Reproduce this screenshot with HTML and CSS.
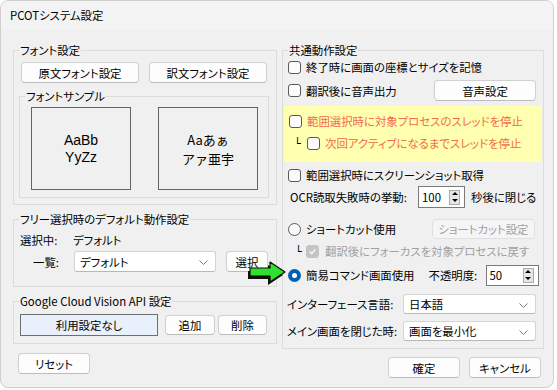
FILE: index.html
```html
<!DOCTYPE html>
<html lang="ja">
<head>
  <meta charset="UTF-8">
  <title>PCOTシステム設定</title>
  <link rel="stylesheet" href="styles.css">
</head>
<body>
  <div class="window">
    <div class="titlebar">PCOTシステム設定</div>

    <div class="content">
      <!-- 左側 -->
      <div class="col-left">
        <fieldset class="group font-group">
          <legend>フォント設定</legend>
          <div class="btn-row">
            <button class="btn font-btn">原文フォント設定</button>
            <button class="btn font-btn">訳文フォント設定</button>
          </div>
          <fieldset class="group sample-group">
            <legend>フォントサンプル</legend>
            <div class="samples">
              <div class="sample">AaBb<br>YyZz</div>
              <div class="sample sample-jp">Aaあぁ<br>アァ亜宇</div>
            </div>
          </fieldset>
        </fieldset>

        <fieldset class="group free-group">
          <legend>フリー選択時のデフォルト動作設定</legend>
          <div class="row current-row">
            <span class="current-label">選択中:</span>
            <span>デフォルト</span>
          </div>
          <div class="row list-row">
            <span class="list-label">一覧:</span>
            <div class="combo list-combo">デフォルト<svg class="chev" viewBox="0 0 9 5"><polyline points="0.5,0.5 4.5,4.5 8.5,0.5"/></svg></div>
            <button class="btn select-btn">選択</button>
          </div>
        </fieldset>

        <fieldset class="group api-group">
          <legend>Google Cloud Vision API 設定</legend>
          <div class="row api-row">
            <div class="api-field">利用設定なし</div>
            <button class="btn add-btn">追加</button>
            <button class="btn del-btn">削除</button>
          </div>
        </fieldset>

        <button class="btn reset-btn">リセット</button>
      </div>

      <!-- 右側 -->
      <div class="col-right">
        <fieldset class="group common-group">
          <legend>共通動作設定</legend>
          <div class="row r-cb1"><span class="cb"></span>終了時に画面の座標とサイズを記憶</div>
          <div class="row r-cb2"><span class="cb"></span>翻訳後に音声出力<button class="btn voice-btn">音声設定</button></div>

          <div class="warn-box">
            <div class="row warn-row"><span class="cb"></span>範囲選択時に対象プロセスのスレッドを停止</div>
            <div class="row warn-sub"><span class="corner">└</span><span class="cb"></span>次回アクティブになるまでスレッドを停止</div>
          </div>

          <div class="row r-cb3"><span class="cb"></span>範囲選択時にスクリーンショット取得</div>
          <div class="row ocr-row">
            <span class="ocr-label">OCR読取失敗時の挙動:</span>
            <div class="spin ocr-spin">100<span class="spin-btns"><i class="up"></i><i class="down"></i></span></div>
            <span class="ocr-after">秒後に閉じる</span>
          </div>

          <div class="row r-radio1"><span class="radio"></span>ショートカット使用<button class="btn btn-disabled sc-btn">ショートカット設定</button></div>
          <div class="row r-sub2"><span class="corner">└</span><span class="cb cb-disabled"><svg viewBox="0 0 13 13"><polyline points="3,6.5 5.5,9 10,4"/></svg></span><span class="muted">翻訳後にフォーカスを対象プロセスに戻す</span></div>
          <div class="row r-radio2">
            <span class="radio radio-on"></span>簡易コマンド画面使用
            <span class="opacity-label">不透明度:</span>
            <div class="spin op-spin">50<span class="spin-btns"><i class="up"></i><i class="down"></i></span></div>
          </div>

          <div class="row lang-row">
            <span class="combo-label">インターフェース言語:</span>
            <div class="combo r-combo">日本語<svg class="chev" viewBox="0 0 9 5"><polyline points="0.5,0.5 4.5,4.5 8.5,0.5"/></svg></div>
          </div>
          <div class="row close-row">
            <span class="combo-label">メイン画面を閉じた時:</span>
            <div class="combo r-combo">画面を最小化<svg class="chev" viewBox="0 0 9 5"><polyline points="0.5,0.5 4.5,4.5 8.5,0.5"/></svg></div>
          </div>
        </fieldset>

        <div class="footer">
          <button class="btn ok-btn">確定</button>
          <button class="btn cancel-btn">キャンセル</button>
        </div>
      </div>

      <svg class="arrow" viewBox="0 0 40 24">
        <polygon class="arrow-shadow" points="1,10 21,10 21,4 36,14 21,24 21,18 1,18"/>
        <polygon class="arrow-body" points="3,7 23,7 23,1 38,11 23,21 23,15 3,15"/>
      </svg>
    </div>
  </div>
</body>
</html>
```

FILE: styles.css
```css
:root {
  --win-bg: #f0f0f0;
  --title-bg: #f3f3f3;
  --group-line: #dcdcdc;
  --btn-bg: #fdfdfd;
  --btn-line: #d0d0d0;
  --warn-bg: #ffffb0;
  --warn-text: #f36a4f;
  --muted: #a0a0a0;
}

html, body {
  margin: 0;
  padding: 0;
  background: #ffffff;
}

body {
  font-family: "Noto Sans CJK JP", "Noto Sans", sans-serif;
  font-size: 11.4px;
  color: #000;
  font-feature-settings: "palt";
}

.window {
  width: 554px;
  height: 388px;
  box-sizing: border-box;
  background: var(--win-bg);
  border: 1px solid #cfcfcf;
  border-radius: 8px;
  overflow: hidden;
}

.titlebar {
  height: 29px;
  line-height: 29px;
  padding-left: 9px;
  background: var(--title-bg);
}

.content {
  position: relative;
  display: flex;
  gap: 5px;
  padding: 13px 0 0 12px;
}

/* group boxes */
.group {
  margin: 0;
  padding: 0;
  min-width: 0;
  box-sizing: border-box;
  border: 1px solid var(--group-line);
}

.group legend {
  margin-left: 5px;
  padding: 0 1px;
  line-height: 14px;
  height: 14px;
}

.row {
  display: flex;
  align-items: center;
  white-space: nowrap;
}

/* buttons */
.btn {
  font: inherit;
  font-feature-settings: "palt";
  color: #000;
  background: var(--btn-bg);
  border: 1px solid var(--btn-line);
  border-bottom-color: #bcbcbc;
  border-radius: 4px;
  padding: 0;
  height: 21px;
  box-sizing: border-box;
  flex: none;
}

.btn-disabled {
  color: var(--muted);
  background: #f5f5f5;
  border-color: #e0e0e0;
}

/* left column */
.col-left {
  width: 264px;
}

.font-group {
  height: 162px;
}

.btn-row {
  display: flex;
  gap: 10px;
  margin: 5px 0 0 7px;
}

.font-btn {
  width: 118px;
}

.sample-group {
  width: 250px;
  height: 109px;
  margin: 6px 0 0 5px;
}

.samples {
  display: flex;
  gap: 27px;
  margin: 4px 0 0 11px;
}

.sample {
  width: 100px;
  height: 83px;
  box-sizing: border-box;
  border: 1px solid #646464;
  display: flex;
  align-items: center;
  justify-content: center;
  text-align: center;
  font-family: "Liberation Sans", "Noto Sans CJK JP", sans-serif;
  font-size: 14px;
  line-height: 17px;
  font-feature-settings: normal;
}

.sample-jp {
  font-family: "Noto Sans CJK JP", sans-serif;
  font-size: 13px;
  line-height: 19px;
}

.free-group {
  height: 75px;
  margin-top: 7px;
}

.current-row {
  height: 20px;
  margin-top: 4px;
  padding-left: 6px;
}

.current-label {
  width: 53px;
}

.list-row {
  height: 21px;
  margin-top: 1px;
  padding-left: 19px;
}

.list-label {
  width: 41px;
}

.combo {
  position: relative;
  display: flex;
  align-items: center;
  box-sizing: border-box;
  height: 21px;
  padding-left: 5px;
  background: #fff;
  border: 1px solid #d4d4d4;
  border-bottom-color: #b8b8b8;
  border-radius: 3px;
}

.chev {
  position: absolute;
  right: 7px;
  top: 8px;
  width: 9px;
  height: 5px;
  fill: none;
  stroke: #7a7a7a;
  stroke-width: 1;
}

.list-combo {
  width: 142px;
}

.select-btn {
  width: 42px;
  margin-left: 10px;
}

.api-group {
  height: 50px;
  margin-top: 7px;
}

.api-row {
  margin: 6px 0 0 6px;
}

.api-field {
  width: 138px;
  height: 22px;
  line-height: 20px;
  box-sizing: border-box;
  text-align: center;
  background: #e8f1fb;
  border: 1px solid #6e6e6e;
}

.add-btn {
  width: 50px;
  height: 20px;
  margin-left: 7px;
}

.del-btn {
  width: 49px;
  height: 20px;
  margin-left: 3px;
}

.reset-btn {
  display: block;
  width: 72px;
  margin: 9px 0 0 5px;
}

/* right column */
.col-right {
  width: 262px;
}

.common-group {
  height: 306px;
}

.cb {
  flex: none;
  width: 13px;
  height: 13px;
  box-sizing: border-box;
  border: 1px solid #5a5a5a;
  border-radius: 3px;
  background: #fbfbfb;
  margin-right: 5px;
}

.cb-disabled {
  border-color: #c4c4c4;
  background: #c4c4c4;
}

.cb-disabled svg {
  display: block;
  width: 11px;
  height: 11px;
  fill: none;
  stroke: #fff;
  stroke-width: 1.6;
}

.radio {
  flex: none;
  width: 13px;
  height: 13px;
  box-sizing: border-box;
  border: 1px solid #5a5a5a;
  border-radius: 50%;
  background: #fbfbfb;
  margin-right: 5px;
}

.radio-on {
  border: 4px solid #005fb8;
  background: #fff;
}

.r-cb1 {
  height: 20px;
  padding-left: 5px;
}

.r-cb2 {
  height: 21px;
  margin-top: 3px;
  padding-left: 5px;
}

.voice-btn {
  width: 102px;
  margin-left: auto;
  margin-right: 7px;
}

.warn-box {
  width: 257px;
  height: 56px;
  box-sizing: border-box;
  margin: 5px 0 0 1px;
  padding-top: 4px;
  background: var(--warn-bg);
  color: var(--warn-text);
}

.warn-row {
  height: 22px;
  padding-left: 5px;
}

.warn-sub {
  height: 22px;
  padding-left: 10px;
}

.corner {
  width: 13px;
  color: #000;
  font-family: "DejaVu Sans", sans-serif;
  font-size: 11px;
}

.r-cb3 {
  height: 20px;
  margin-top: 3px;
  padding-left: 5px;
}

.ocr-row {
  height: 22px;
  margin-top: 1px;
  padding-left: 7px;
}

.ocr-label {
  width: 128px;
}

.spin {
  display: flex;
  align-items: center;
  box-sizing: border-box;
  height: 22px;
  padding-left: 3px;
  background: #fff;
  border: 1px solid #7a7a7a;
}

.spin-btns {
  display: flex;
  flex-direction: column;
  justify-content: space-around;
  align-items: center;
  width: 11px;
  height: 15px;
  margin-left: auto;
  margin-right: 4px;
  box-sizing: border-box;
  background: #e6e6e6;
  border: 1px solid #ababab;
}

.spin-btns i {
  width: 0;
  height: 0;
  border-left: 3px solid transparent;
  border-right: 3px solid transparent;
}

.spin-btns .up {
  border-bottom: 3px solid #000;
}

.spin-btns .down {
  border-top: 3px solid #000;
}

.ocr-spin {
  width: 47px;
}

.ocr-after {
  margin-left: 6px;
}

.r-radio1 {
  height: 20px;
  margin-top: 11px;
  padding-left: 5px;
}

.sc-btn {
  width: 103px;
  height: 20px;
  margin-left: auto;
  margin-right: 8px;
}

.r-sub2 {
  height: 20px;
  margin-top: 2px;
  padding-left: 12px;
}

.r-sub2 .cb {
  margin-left: -2px;
  margin-right: 6px;
}

.muted {
  color: var(--muted);
}

.r-radio2 {
  height: 22px;
  margin-top: 3px;
  padding-left: 5px;
}

.opacity-label {
  margin-left: 14px;
  width: 57px;
}

.op-spin {
  width: 53px;
  height: 21px;
}

.lang-row {
  height: 20px;
  margin-top: 8px;
  padding-left: 4px;
}

.close-row {
  height: 20px;
  margin-top: 7px;
  padding-left: 4px;
}

.combo-label {
  width: 116px;
}

.r-combo {
  width: 133px;
  height: 20px;
}

.footer {
  display: flex;
  justify-content: flex-end;
  gap: 9px;
  margin: 8px 3px 0 0;
}

.ok-btn,
.cancel-btn {
  width: 72px;
}

/* green pointer over the layout */
.arrow {
  position: absolute;
  left: 246px;
  top: 231px;
  width: 40px;
  height: 24px;
}

.arrow-shadow {
  fill: #111;
}

.arrow-body {
  fill: #2fe02f;
  stroke: #0a0a0a;
  stroke-width: 1.2;
  stroke-linejoin: round;
}
```
